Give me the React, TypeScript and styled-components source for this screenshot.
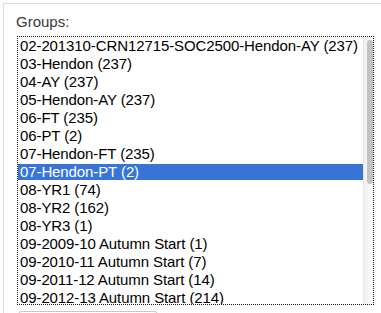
import React from 'react';
import styled, { createGlobalStyle } from 'styled-components';

const GlobalStyle = createGlobalStyle`
  html, body {
    margin: 0;
    padding: 0;
    background: #ffffff;
    overflow: hidden;
  }
  body {
    font-family: "Liberation Sans", Arial, Helvetica, sans-serif;
  }
`;

const groups = [
  '02-201310-CRN12715-SOC2500-Hendon-AY (237)',
  '03-Hendon (237)',
  '04-AY (237)',
  '05-Hendon-AY (237)',
  '06-FT (235)',
  '06-PT (2)',
  '07-Hendon-FT (235)',
  '07-Hendon-PT (2)',
  '08-YR1 (74)',
  '08-YR2 (162)',
  '08-YR3 (1)',
  '09-2009-10 Autumn Start (1)',
  '09-2010-11 Autumn Start (7)',
  '09-2011-12 Autumn Start (14)',
  '09-2012-13 Autumn Start (214)',
];

const selectedIndex = 7;

const Panel = styled.div`
  margin: 3px 0 0 3px;
  height: 320px;
  border-top: 1px solid #dcdcdc;
  border-left: 1px solid #dcdcdc;
  padding: 9px 0 0 13px;
  box-sizing: border-box;
`;

const Label = styled.div`
  font-size: 15px;
  line-height: 18px;
  color: #3a3a3a;
  margin-left: -1px;
  margin-bottom: 5px;
`;

const ListBox = styled.div`
  width: 357px;
  height: 269px;
  box-sizing: border-box;
  border: 1px dotted #1a1a1a;
  display: flex;
  overflow: hidden;
  background: #ffffff;
`;

const Options = styled.ul`
  flex: 1;
  margin: 0;
  padding: 0;
  list-style: none;
  overflow: hidden;
`;

const Option = styled.li<{ $selected?: boolean }>`
  height: 18px;
  line-height: 18px;
  font-size: 15px;
  letter-spacing: -0.1px;
  padding-left: 2px;
  white-space: nowrap;
  color: ${({ $selected }) => ($selected ? '#ffffff' : '#000000')};
  background: ${({ $selected }) =>
    $selected
      ? 'linear-gradient(to bottom, transparent 0, transparent 1px, #3875d7 1px, #3875d7 17px, transparent 17px)'
      : 'transparent'};
`;

const Track = styled.div`
  width: 10px;
  flex: none;
  border-left: 1px solid #e6e6e6;
  background: linear-gradient(to right, #f0f0f0, #fbfbfb);
  padding: 3px 1px 0 3px;
  box-sizing: border-box;
`;

const Thumb = styled.div`
  width: 6px;
  height: 144px;
  border-radius: 4px;
  background: #c3c3c3;
`;

const Button = styled.div`
  margin-top: 6px;
  width: 140px;
  height: 24px;
  border: 1px solid #c8c8c8;
  border-radius: 5px;
  background: linear-gradient(#ffffff, #f0f0f0);
`;

export default function App() {
  return (
    <>
      <GlobalStyle />
      <Panel>
        <Label>Groups:</Label>
        <ListBox>
          <Options>
            {groups.map((g, i) => (
              <Option key={g} $selected={i === selectedIndex}>
                {g}
              </Option>
            ))}
          </Options>
          <Track>
            <Thumb />
          </Track>
        </ListBox>
        <Button />
      </Panel>
    </>
  );
}
